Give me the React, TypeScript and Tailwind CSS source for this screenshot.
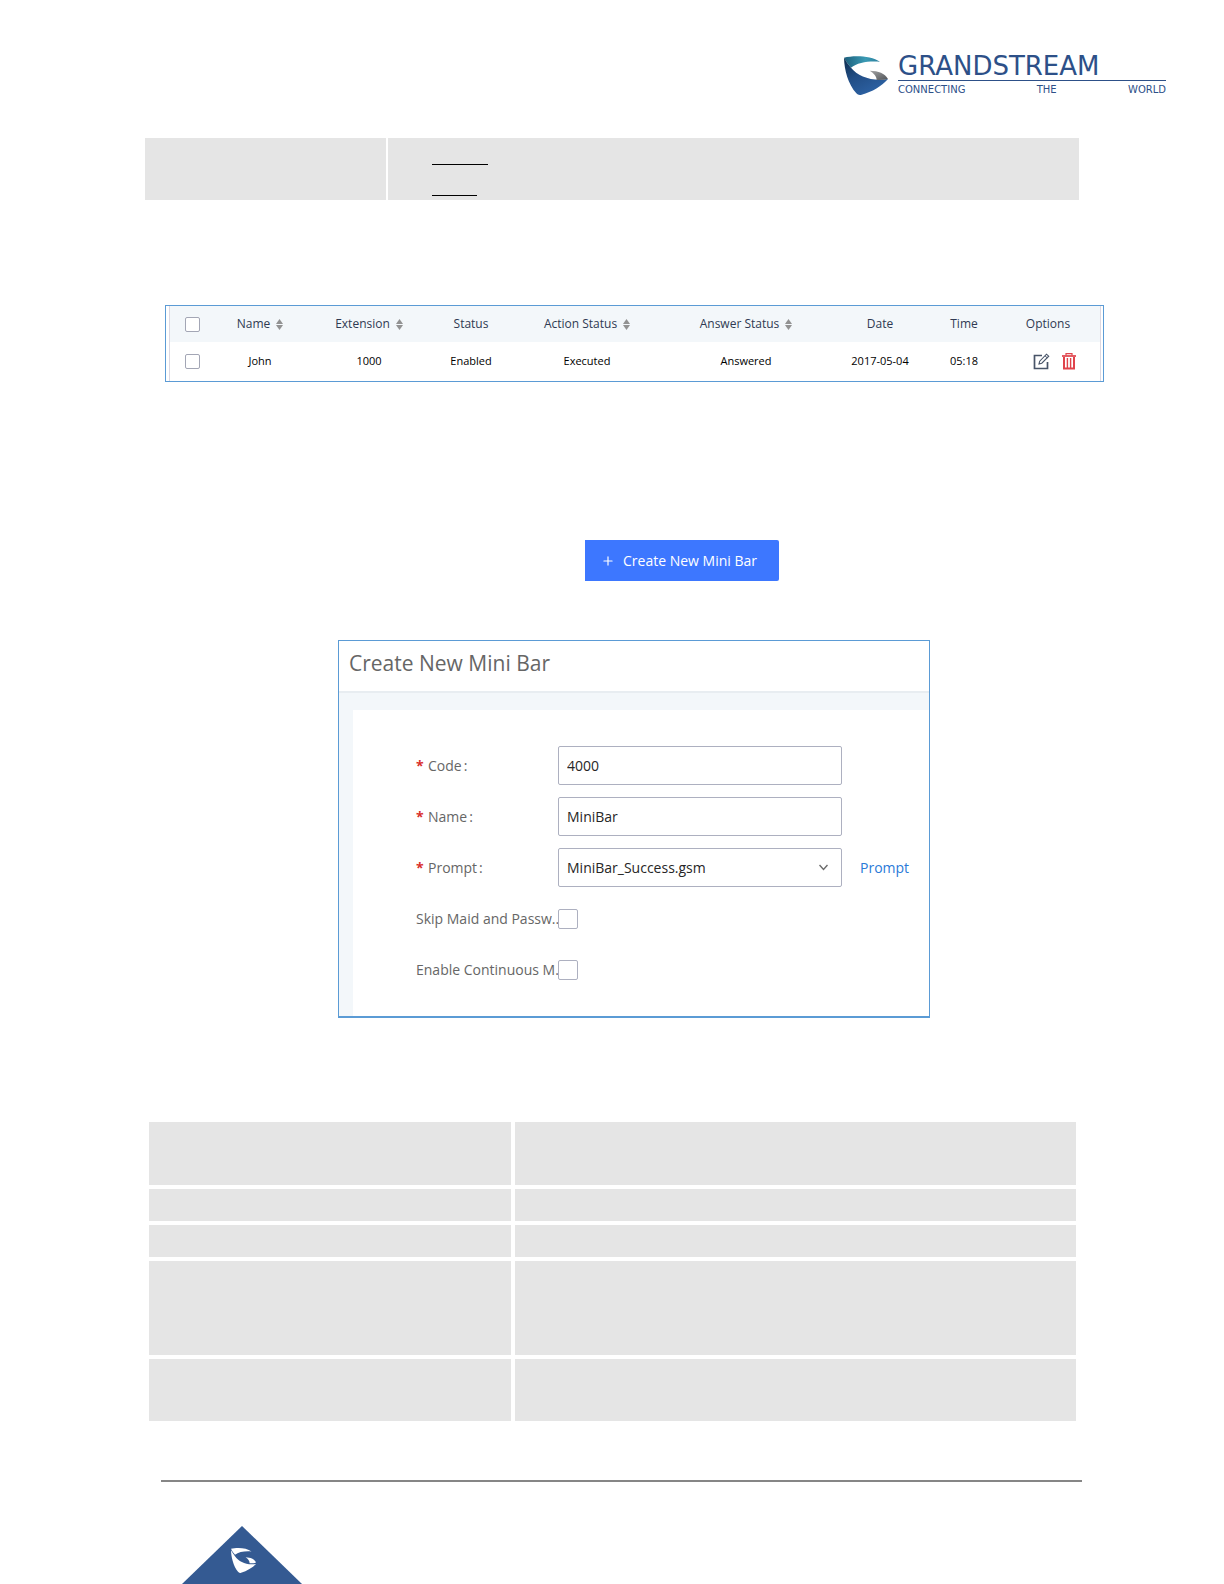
import { Plus } from 'lucide-react';

const columns = [
    { label: 'Name', sortable: true, width: 'w-[92px]' },
    { label: 'Extension', sortable: true, width: 'w-[126px]' },
    { label: 'Status', sortable: false, width: 'w-[78px]' },
    { label: 'Action Status', sortable: true, width: 'w-[154px]' },
    { label: 'Answer Status', sortable: true, width: 'w-[164px]' },
    { label: 'Date', sortable: false, width: 'w-[104px]' },
    { label: 'Time', sortable: false, width: 'w-[64px]' },
    { label: 'Options', sortable: false, width: 'w-[104px]' },
];

const calls = [['John', '1000', 'Enabled', 'Executed', 'Answered', '2017-05-04', '05:18']];

const parameterRows = ['h-[63px]', 'h-8', 'h-8', 'h-[94px]', 'h-[62px]'];

function LogoMark() {
    return (
        <svg viewBox="0 0 132 118" className="w-11 h-10 shrink-0">
            <defs>
                <linearGradient id="teal" x1="0" y1="0" x2="1" y2="0">
                    <stop offset="0" stopColor="#1d5f7c" />
                    <stop offset="0.6" stopColor="#3a9ab4" />
                    <stop offset="1" stopColor="#2c7f9e" />
                </linearGradient>
                <linearGradient id="navy" x1="0" y1="0" x2="0.6" y2="1">
                    <stop offset="0" stopColor="#0c2c4c" />
                    <stop offset="0.5" stopColor="#224e86" />
                    <stop offset="1" stopColor="#2d62a4" />
                </linearGradient>
                <linearGradient id="silver" x1="0" y1="0" x2="1" y2="1">
                    <stop offset="0" stopColor="#a5a5a5" />
                    <stop offset="1" stopColor="#4f5357" />
                </linearGradient>
            </defs>
            <path d="M0 4C30-4 82-2 108 16C76 13 40 18 21 34C13 24 5 14 0 4Z" fill="url(#teal)" />
            <path d="M0 4C6 15 13 25 21 34C42 60 84 76 132 68C114 89 84 107 53 115Q43 118 37 111C12 82 1 42 0 4Z" fill="url(#navy)" />
            <path d="M77 43C104 44 122 50 132 68C120 71 108 72 98 71C98 60 90 51 77 43Z" fill="url(#silver)" />
        </svg>
    );
}

function SortIcon() {
    return (
        <svg viewBox="0 0 7 11" className="w-[7px] h-[11px]" fill="#929292">
            <path d="M3.5 0L7 5H0Z" />
            <path d="M3.5 11L0 6H7Z" />
        </svg>
    );
}

function EditIcon() {
    return (
        <svg viewBox="0 0 17 17" className="w-[17px] h-[17px]" fill="none" stroke="#485468">
            <path d="M9 2.5H1.5V15.5H14.5V9" strokeWidth="1.7" />
            <path d="M6 11L6.7 8.2L13.5 1.2L15.7 3.2L8.8 10.2Z" strokeWidth="1.1" />
            <path d="M12 2.8L14.2 4.8" strokeWidth="1" />
        </svg>
    );
}

function TrashIcon() {
    return (
        <svg viewBox="0 0 14 17" className="w-[14px] h-[17px]" fill="none" stroke="#e0434b">
            <path d="M0 3H14" strokeWidth="1.7" />
            <path d="M4 2.5V.7H10V2.5" strokeWidth="1.2" />
            <path d="M2 4V15.5H12V4" strokeWidth="2" />
            <path d="M5.4 5V15M8.6 5V15" strokeWidth="1.4" />
        </svg>
    );
}

function CallsTable() {
    return (
        <div className="mt-[105px] ml-[165px] mr-[120px] border border-[#5b9bd5] px-[3px]">
            <table className="w-full table-fixed border-separate border-spacing-0 border-x border-[#dcd8e2] text-center">
                <thead>
                    <tr className="h-9 bg-[#f3f7fa] text-xs text-[#2f3a52]">
                        <th className="w-11">
                            <input type="checkbox" aria-label="Select all" className="block mx-auto size-[15px] appearance-none rounded-xs border border-[#a3a6b5] bg-white" />
                        </th>
                        {columns.map((col) => (
                            <th key={col.label} className={`font-normal ${col.width}`}>
                                <span className="inline-flex items-center gap-1.5">
                                    {col.label}
                                    {col.sortable && <SortIcon />}
                                </span>
                            </th>
                        ))}
                    </tr>
                </thead>
                <tbody>
                    {calls.map((row) => (
                        <tr key={row[0]} className="h-[39px] text-[11px] text-black">
                            <td>
                                <input type="checkbox" aria-label={row[0]} className="block mx-auto size-[15px] appearance-none rounded-xs border border-[#a3a6b5] bg-white" />
                            </td>
                            {row.map((cell) => (
                                <td key={cell}>{cell}</td>
                            ))}
                            <td>
                                <div className="flex justify-center gap-3 pl-3">
                                    <button aria-label="Edit"><EditIcon /></button>
                                    <button aria-label="Delete"><TrashIcon /></button>
                                </div>
                            </td>
                        </tr>
                    ))}
                </tbody>
            </table>
        </div>
    );
}

function FieldLabel({ htmlFor, text }: { htmlFor: string; text: string }) {
    return (
        <label htmlFor={htmlFor} className="flex w-[142px]">
            <span className="w-3 font-bold text-[#d9302c]">*</span>
            {text}
            <span className="ml-0.5">:</span>
        </label>
    );
}

function MiniBarForm() {
    return (
        <form className="mt-[59px] ml-[338px] w-full max-w-[592px] border border-b-2 border-[#5b9bd5]">
            <h2 className="h-[50px] pl-2.5 pt-1.5 text-[21px] leading-8 text-[#666]">Create New Mini Bar</h2>
            <div className="bg-[#f3f7fa] border-t-2 border-[#e8edf1] pt-[17px] pl-3.5">
                <div className="flex flex-col gap-3 bg-white pl-[63px] pt-9 pb-[27px] text-sm text-[#666]">
                    <div className="flex items-center h-[39px]">
                        <FieldLabel htmlFor="code" text="Code" />
                        <input id="code" defaultValue="4000" className="w-[284px] h-full rounded-xs border border-[#adb0c0] px-2 text-[#262626]" />
                    </div>
                    <div className="flex items-center h-[39px]">
                        <FieldLabel htmlFor="name" text="Name" />
                        <input id="name" defaultValue="MiniBar" className="w-[284px] h-full rounded-xs border border-[#adb0c0] px-2 text-[#262626]" />
                    </div>
                    <div className="flex items-center h-[39px]">
                        <FieldLabel htmlFor="prompt" text="Prompt" />
                        <div className="relative w-[284px] h-full">
                            <select id="prompt" className="w-full h-full appearance-none rounded-xs border border-[#adb0c0] px-2 text-[#262626]">
                                <option>MiniBar_Success.gsm</option>
                            </select>
                            <svg viewBox="0 0 9 7" className="absolute right-3.5 top-4 w-[9px] h-[7px] pointer-events-none" fill="none" stroke="#6b6b6b" strokeWidth="1.4">
                                <path d="M.5 1L4.5 5.5L8.5 1" />
                            </svg>
                        </div>
                        <a href="#prompt" className="ml-[18px] text-[#2a7ad8]">Prompt</a>
                    </div>
                    <div className="flex items-center h-[39px]">
                        <label htmlFor="skip" className="w-[142px] whitespace-nowrap">Skip Maid and Passw...</label>
                        <input id="skip" type="checkbox" className="relative size-5 appearance-none rounded-xs border border-[#adb0c0] bg-white" />
                    </div>
                    <div className="flex items-center h-[39px]">
                        <label htmlFor="continuous" className="w-[142px] whitespace-nowrap">Enable Continuous M...</label>
                        <input id="continuous" type="checkbox" className="relative size-5 appearance-none rounded-xs border border-[#adb0c0] bg-white" />
                    </div>
                </div>
            </div>
        </form>
    );
}

export default function App() {
    return (
        <div className="flex flex-col bg-white font-['Open_Sans',sans-serif]">
            <header className="flex justify-end gap-2.5 h-[138px] pt-14 pr-[58px]">
                <LogoMark />
                <div className="w-[268px] font-['DejaVu_Sans',sans-serif] text-[#2d5088]">
                    <div className="pb-1 text-[26px] leading-5 border-b border-[#2d5088]">GRANDSTREAM</div>
                    <div className="flex justify-between text-[10px] leading-[18px]">
                        <span>CONNECTING</span>
                        <span>THE</span>
                        <span>WORLD</span>
                    </div>
                </div>
            </header>

            <div className="grid grid-cols-[241fr_691fr] gap-0.5 h-[62px] ml-[145px] mr-[145px]">
                <div className="bg-[#e5e5e5]" />
                <div className="bg-[#e5e5e5] pl-11">
                    <div className="w-14 h-[27px] border-b border-black" />
                    <div className="w-[45px] h-[31px] border-b border-black" />
                </div>
            </div>

            <CallsTable />

            <button className="mt-[158px] ml-[585px] flex items-center gap-2 w-[194px] h-[41px] pl-4 rounded-r-xs bg-[#3d77ff] text-sm font-medium text-white">
                <Plus size={14} strokeWidth={2} />
                Create New Mini Bar
            </button>

            <MiniBarForm />

            <div className="grid grid-cols-[362fr_562fr] gap-1 mt-[104px] ml-[149px] mr-[148px]">
                {parameterRows.map((height, idx) => (
                    <div key={idx} className="contents">
                        <div className={`bg-[#e5e5e5] ${height}`} />
                        <div className={`bg-[#e5e5e5] ${height}`} />
                    </div>
                ))}
            </div>

            <footer className="mt-[59px] ml-[161px] mr-[142px]">
                <div className="h-0.5 bg-[#868686]" />
                <svg viewBox="0 0 120 58" className="mt-11 ml-[21px] w-[120px] h-[58px]">
                    <path d="M60 0L120 58H0Z" fill="#345a92" />
                    <g fill="#fff" transform="translate(49 22) scale(.19 .215)">
                        <path d="M0 4C30-4 82-2 108 16C76 13 40 18 21 31C13 24 5 14 0 4Z" />
                        <path d="M0 10C6 19 13 29 21 38C42 64 84 82 132 74C114 91 84 107 53 115Q43 118 37 111C12 82 1 42 0 10Z" />
                        <path d="M77 43C104 44 122 50 132 68C120 71 108 72 98 71C98 60 90 51 77 43Z" />
                    </g>
                </svg>
            </footer>
        </div>
    );
}
